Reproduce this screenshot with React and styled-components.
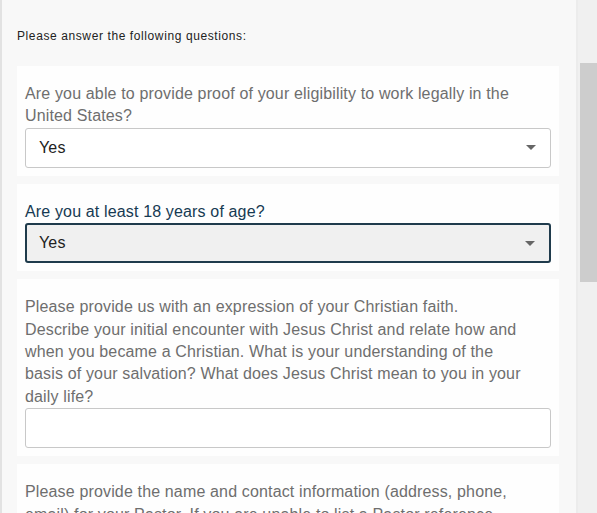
import React from "react";
import styled, { createGlobalStyle } from "styled-components";

const Global = createGlobalStyle`
  html, body {
    margin: 0;
    padding: 0;
    background: #f8f8f8;
  }
  * {
    box-sizing: border-box;
  }
`;

const questions = [
  {
    id: "eligibility",
    label:
      "Are you able to provide proof of your eligibility to work legally in the United States?",
    type: "select",
    value: "Yes",
  },
  {
    id: "age",
    label: "Are you at least 18 years of age?",
    type: "select",
    value: "Yes",
    focused: true,
  },
  {
    id: "faith",
    label:
      "Please provide us with an expression of your Christian faith. Describe your initial encounter with Jesus Christ and relate how and when you became a Christian. What is your understanding of the basis of your salvation? What does Jesus Christ mean to you in your daily life?",
    type: "text",
  },
  {
    id: "pastor",
    label:
      "Please provide the name and contact information (address, phone, email) for your Pastor. If you are unable to list a Pastor reference, please explain why.",
    type: "text",
  },
];

const App = () => {
  return (
    <Frame>
      <Global />
      <Panel>
        <Intro>Please answer the following questions:</Intro>
        <List>
          {questions.map((q) => (
            <Card key={q.id}>
              <Label $focused={q.focused}>{q.label}</Label>
              {q.type === "select" ? (
                <Select $focused={q.focused}>
                  <span>{q.value}</span>
                  <Caret />
                </Select>
              ) : (
                <TextInput />
              )}
            </Card>
          ))}
        </List>
      </Panel>
      <Scrollbar>
        <Thumb />
      </Scrollbar>
    </Frame>
  );
};

export default App;

const Frame = styled.div`
  display: flex;
  height: 513px;
  overflow: hidden;
  border-left: 2px solid #e2e2e2;
  font-family: "Liberation Sans", Arial, sans-serif;
`;

const Panel = styled.div`
  flex: 1;
  background: #f8f8f8;
  padding: 29px 17px 0 15px;
  border-right: 2px solid #ececec;
`;

const Intro = styled.div`
  font-size: 12px;
  line-height: 14px;
  letter-spacing: 0.6px;
  color: #222;
  margin-bottom: 23px;
`;

const List = styled.div`
  display: flex;
  flex-direction: column;
  gap: 8px;
`;

const Card = styled.div`
  background: #fefefe;
  padding: 17px 8px 8px;
`;

const Label = styled.div`
  max-width: 502px;
  font-size: 16px;
  line-height: 22.4px;
  letter-spacing: 0.15px;
  color: ${(p) => (p.$focused ? "#163a52" : "#6e6e6e")};
`;

const Select = styled.div`
  display: flex;
  align-items: center;
  justify-content: space-between;
  height: 40px;
  padding: 0 14px 0 ${(p) => (p.$focused ? "12px" : "13px")};
  border: ${(p) => (p.$focused ? "2px solid #1f3b4c" : "1px solid #c8c8c8")};
  border-radius: 3px;
  background: ${(p) => (p.$focused ? "#f0f0f0" : "#fff")};
  font-size: 16px;
  letter-spacing: 0.15px;
  color: #222;
`;

const Caret = styled.span`
  width: 0;
  height: 0;
  border-left: 5px solid transparent;
  border-right: 5px solid transparent;
  border-top: 5px solid #666;
`;

const TextInput = styled.div`
  height: 40px;
  border: 1px solid #c8c8c8;
  border-radius: 3px;
  background: #fff;
`;

const Scrollbar = styled.div`
  width: 19px;
  background: #f0f0f0;
  padding: 63px 0 0 2px;
`;

const Thumb = styled.div`
  height: 219px;
  background: #cdcdcd;
`;
